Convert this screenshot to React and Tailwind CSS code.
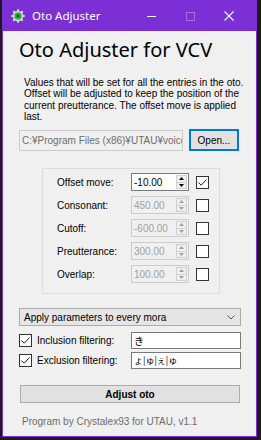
import React from "react";

const SANS = "font-['Liberation_Sans',Arial,sans-serif]";

function Spinner({ value, enabled }) {
  return (
    <div
      className={`flex h-[18px] w-[58px] items-stretch border ${
        enabled ? "border-[#7a7a7a] bg-white" : "border-[#cccccc] bg-[#f0f0f0]"
      }`}
    >
      <div
        className={`flex flex-1 items-center pl-[2px] text-[10px] ${
          enabled ? "text-black" : "text-[#a0a0a0]"
        }`}
      >
        {value}
      </div>
      <div className="my-[1px] mr-[1px] flex w-[11px] flex-col border border-[#d0d0d0] bg-[#f0f0f0]">
        <div className="flex flex-1 items-center justify-center">
          <svg width="5" height="3" viewBox="0 0 5 3">
            <path d="M0 3 L2.5 0 L5 3 Z" fill={enabled ? "#000" : "#a0a0a0"} />
          </svg>
        </div>
        <div className="h-px bg-[#d0d0d0]" />
        <div className="flex flex-1 items-center justify-center">
          <svg width="5" height="3" viewBox="0 0 5 3">
            <path d="M0 0 L2.5 3 L5 0 Z" fill={enabled ? "#000" : "#a0a0a0"} />
          </svg>
        </div>
      </div>
    </div>
  );
}

function CheckBox({ checked }) {
  return (
    <div className="flex h-[13px] w-[13px] items-center justify-center border border-[#333333] bg-white">
      {checked && (
        <svg width="11" height="11" viewBox="0 0 11 11">
          <path d="M1.5 5.5 L4.2 8.2 L9.5 2.5" fill="none" stroke="#222" strokeWidth="1" />
        </svg>
      )}
    </div>
  );
}

function Row({ label, value, enabled, checked }) {
  return (
    <div className="flex h-[18px] items-center">
      <div className="w-[74px] text-[10px] text-black">{label}</div>
      <Spinner value={value} enabled={enabled} />
      <div className="ml-[7px]">
        <CheckBox checked={checked} />
      </div>
    </div>
  );
}

export default function App() {
  return (
    <div className={`h-[440px] w-[261px] bg-[#1c1c1c] pb-[3px] pl-[2px] pr-[4px] ${SANS}`}>
      <div className="flex h-full flex-col border border-[#7b2fd4] bg-[#f0f0f0]">
        {/* Title bar */}
        <div className="flex h-[30px] items-center bg-[#7b2fd4] text-white">
          <div className="ml-[8px] flex h-[14px] w-[14px] items-center justify-center">
            <svg width="14" height="14" viewBox="0 0 14 14">
              <g fill="#d8d8d8">
                <circle cx="7" cy="7" r="5.3" />
                <rect x="6" y="0.3" width="2" height="3" />
                <rect x="6" y="10.7" width="2" height="3" />
                <rect x="0.3" y="6" width="3" height="2" />
                <rect x="10.7" y="6" width="3" height="2" />
                <rect x="6" y="0.3" width="2" height="3" transform="rotate(45 7 7)" />
                <rect x="6" y="10.7" width="2" height="3" transform="rotate(45 7 7)" />
                <rect x="0.3" y="6" width="3" height="2" transform="rotate(45 7 7)" />
                <rect x="10.7" y="6" width="3" height="2" transform="rotate(45 7 7)" />
              </g>
              <circle cx="7" cy="7" r="3.8" fill="#2fb84a" />
              <circle cx="7" cy="7" r="1.8" fill="#1d5e2a" />
            </svg>
          </div>
          <div className="ml-[7px] font-['Noto_Sans',sans-serif] text-[11.5px] leading-none">
            Oto Adjuster
          </div>
          <div className="flex-1" />
          <div className="flex w-[38px] justify-center">
            <div className="h-px w-[9px] bg-white" />
          </div>
          <div className="flex w-[40px] justify-center">
            <div className="h-[9px] w-[9px] border border-[#a070e0]" />
          </div>
          <div className="mr-[8px] flex w-[38px] justify-center">
            <svg width="10" height="10" viewBox="0 0 10 10">
              <path d="M0.5 0.5 L9.5 9.5 M9.5 0.5 L0.5 9.5" stroke="#fff" strokeWidth="1.1" />
            </svg>
          </div>
        </div>

        {/* Heading */}
        <div className="mt-[4px] h-[28px] pl-[16px] font-['Noto_Sans',sans-serif] text-[20px] leading-[29px] text-black">
          Oto Adjuster for VCV
        </div>

        {/* Description */}
        <div className="ml-[21px] mt-[14px] text-[10px] leading-[11.25px] text-black">
          <div className="whitespace-nowrap">Values that will be set for all the entries in the oto.</div>
          <div className="whitespace-nowrap">Offset will be adjusted to keep the position of the</div>
          <div className="whitespace-nowrap">current preutterance. The offset move is applied</div>
          <div className="whitespace-nowrap">last.</div>
        </div>

        {/* Path row */}
        <div className="ml-[16px] mt-[7px] flex items-center gap-[6px]">
          <div className="flex h-[21px] w-[164px] items-center overflow-hidden whitespace-nowrap border border-[#cccccc] bg-[#f0f0f0] pl-[2px] text-[10px] text-[#6d6d6d]">
            C:¥Program Files (x86)¥UTAU¥voice¥
          </div>
          <div className="flex h-[22px] w-[50px] items-center justify-center border border-[#0078d7] bg-[#e5f1fb] text-[10px] text-black">
            <div className="flex h-full w-full items-center justify-center border border-[#0078d7] bg-[#e1e1e1]">
              Open...
            </div>
          </div>
        </div>

        {/* Group box */}
        <div className="ml-[39px] mt-[17px] flex w-[178px] flex-col gap-[5px] border border-[#dcdcdc] pb-[10px] pl-[14px] pt-[4px]">
          <Row label="Offset move:" value="-10.00" enabled checked />
          <Row label="Consonant:" value="450.00" />
          <Row label="Cutoff:" value="-600.00" />
          <Row label="Preutterance:" value="300.00" />
          <Row label="Overlap:" value="100.00" />
        </div>

        {/* Dropdown */}
        <div className="ml-[16px] mt-[14px] flex h-[18px] w-[222px] items-center border border-[#acacac] bg-[#e5e5e5] pl-[4px] pr-[5px] text-[10px] text-black">
          <div className="flex-1">Apply parameters to every mora</div>
          <svg width="8" height="5" viewBox="0 0 8 5">
            <path d="M0.5 0.5 L4 4 L7.5 0.5" fill="none" stroke="#555" strokeWidth="1" />
          </svg>
        </div>

        {/* Filters */}
        <div className="ml-[16px] mt-[6px] flex flex-col gap-[3px]">
          <div className="flex h-[17px] items-center">
            <CheckBox checked />
            <div className="ml-[5px] w-[94px] text-[10px] text-black">Inclusion filtering:</div>
            <div className="flex h-[17px] w-[110px] items-center border border-[#7a7a7a] bg-white pl-[2px] font-['Noto_Sans_CJK_JP',sans-serif] text-[10px] leading-none text-black">
              き
            </div>
          </div>
          <div className="flex h-[17px] items-center">
            <CheckBox checked />
            <div className="ml-[5px] w-[94px] text-[10px] text-black">Exclusion filtering:</div>
            <div className="flex h-[17px] w-[110px] items-center border border-[#7a7a7a] bg-white pl-[2px] font-['Noto_Sans_CJK_JP',sans-serif] text-[9px] leading-none text-black">
              ょ|ゅ|ぇ|ゅ
            </div>
          </div>
        </div>

        {/* Adjust button */}
        <div className="ml-[17px] mt-[16px] flex h-[18px] w-[220px] items-center justify-center border border-[#adadad] bg-[#e1e1e1] text-[10px] font-bold text-black">
          Adjust oto
        </div>

        {/* Footer */}
        <div className="ml-[19px] mt-[13px] text-[10px] leading-[12px] text-[#6d6d6d]">
          Program by Crystalex93 for UTAU, v1.1
        </div>
      </div>
    </div>
  );
}
